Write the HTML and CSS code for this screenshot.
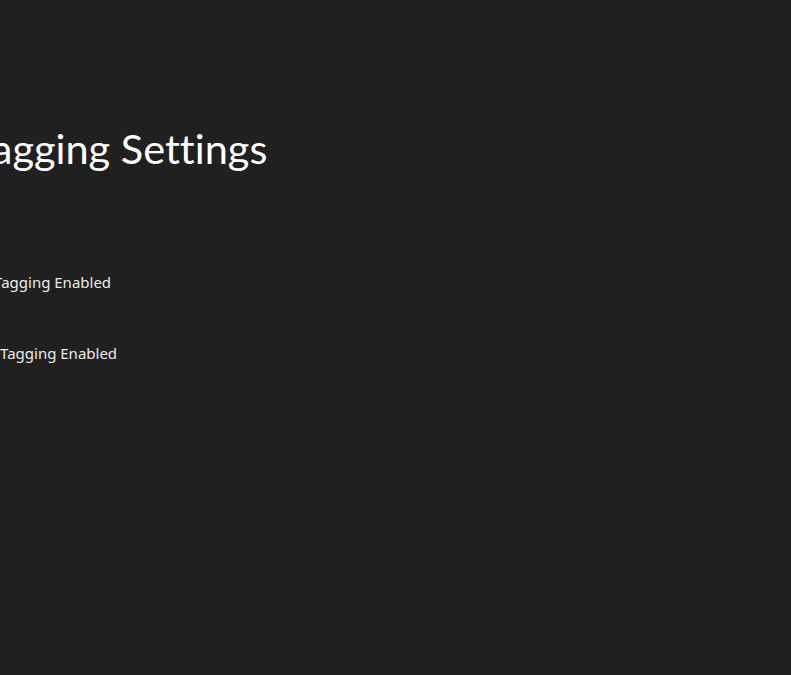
FILE: index.html
```html
<!DOCTYPE html>
<html lang="en">
<head>
<meta charset="utf-8">
<title>Tagging Settings</title>
<link rel="stylesheet" href="styles.css">
</head>
<body>
<main class="page">
  <h1 class="title">Tagging Settings</h1>
  <div class="settings">
    <div class="row row-first"><span class="label">Tagging Enabled</span></div>
    <div class="row row-second"><span class="label">Tagging Enabled</span></div>
  </div>
</main>
</body>
</html>
```
FILE: styles.css
```css
html, body {
  margin: 0;
  padding: 0;
  background: #202020;
  width: 791px;
  height: 675px;
  overflow: hidden;
}
.page {
  font-family: "Noto Sans", "Open Sans", sans-serif;
  color: #ffffff;
  padding-top: 120px;
}
.title {
  margin: 0 0 0 -28px;
  font-family: "Lato", "Noto Sans", sans-serif;
  font-size: 41.5px;
  font-weight: 400;
  line-height: 56px;
  white-space: nowrap;
  font-variant-ligatures: none;
}
.settings {
  display: flex;
  flex-direction: column;
  gap: 49px;
  margin-top: 95px;
}
.row {
  display: flex;
  align-items: center;
  height: 22px;
  white-space: nowrap;
}
.label {
  font-size: 15px;
  color: #ececec;
}
.row-first { margin-left: -6px; }
.row-second { margin-left: 0; }
```
